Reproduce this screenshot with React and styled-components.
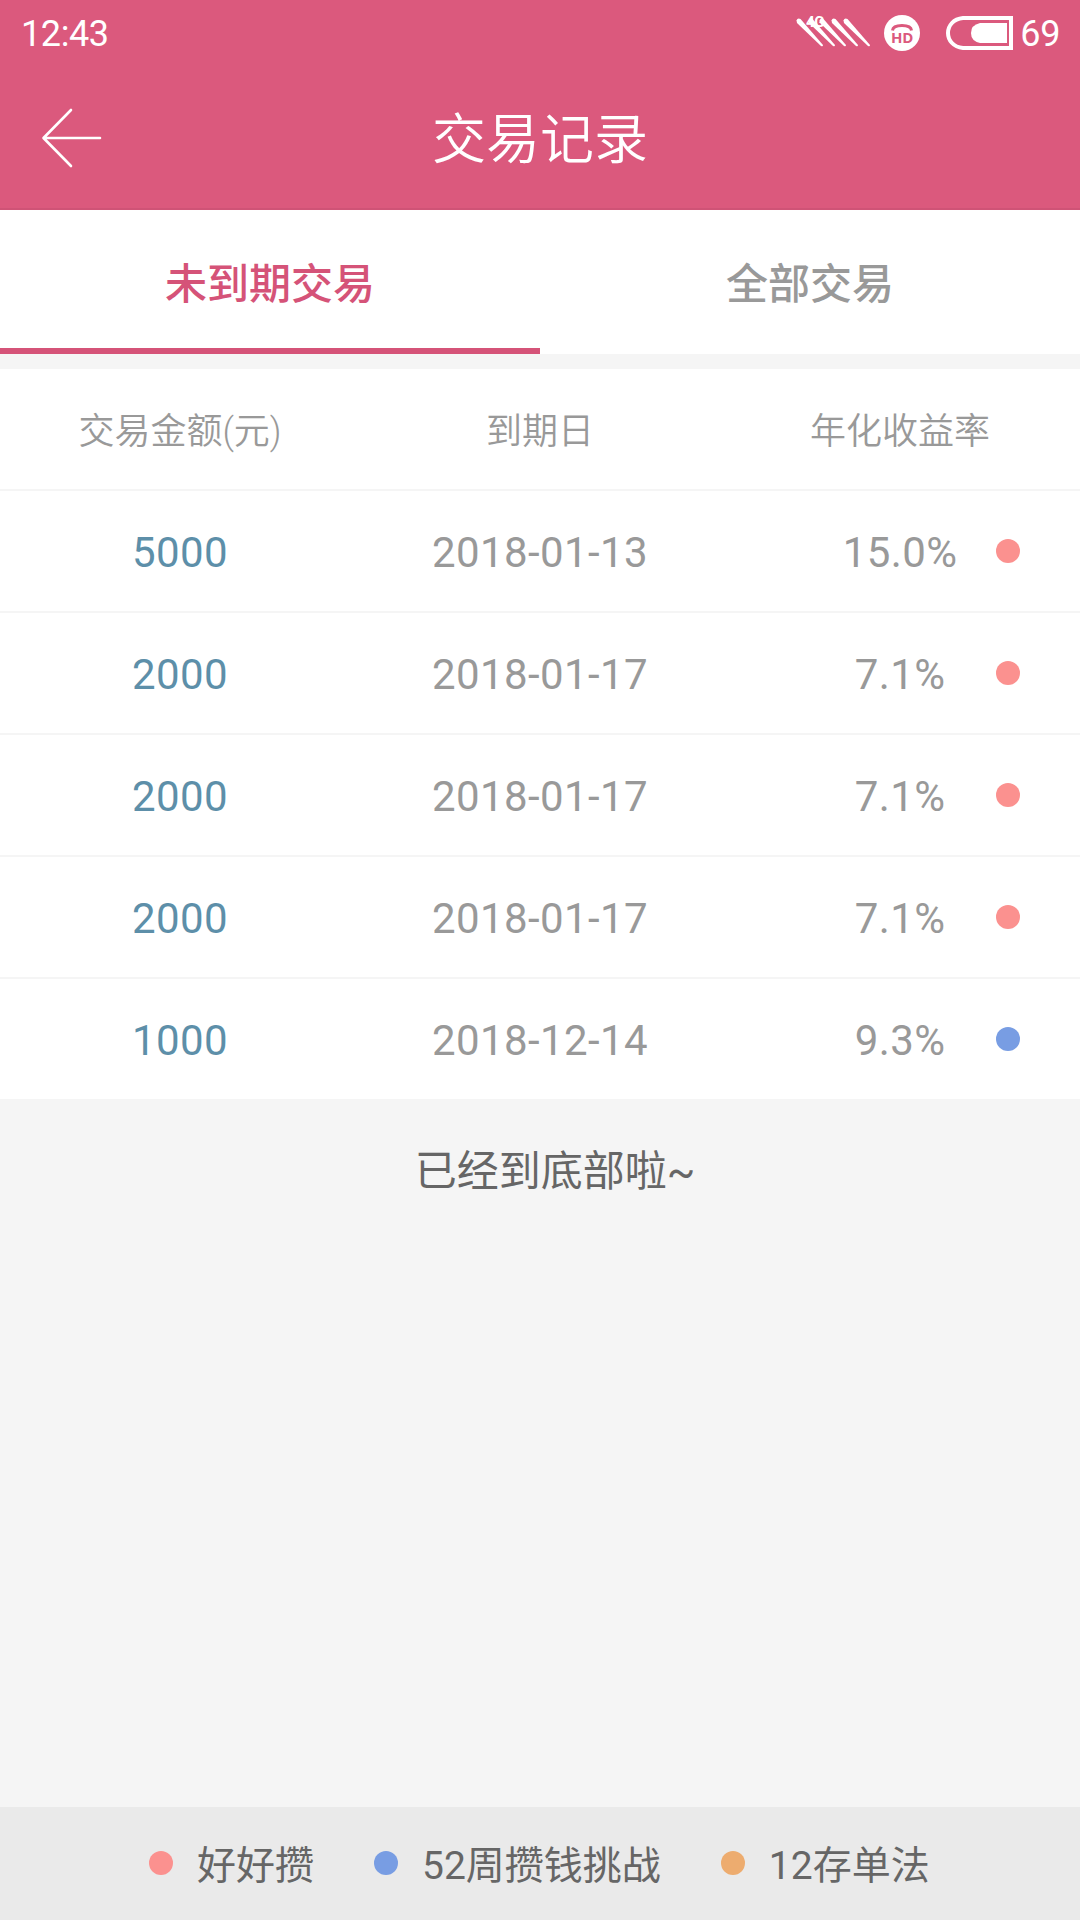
import React from 'react';
import styled, { createGlobalStyle } from 'styled-components';

const GlobalStyle = createGlobalStyle`
    body {
        margin: 0;
        background: #f5f5f5;
    }
`;

const Screen = styled.div`
    width: 1080px;
    height: 1920px;
    overflow: hidden;

    display: flex;
    flex-direction: column;

    background: #f5f5f5;
    font-family: Roboto, 'Noto Sans CJK SC', sans-serif;
`;

const Header = styled.header`
    box-sizing: border-box;
    height: 210px;
    border-bottom: 2px solid #cf5376;
    background: #db597d;
    color: #fff;
`;

const StatusBar = styled.div`
    box-sizing: border-box;
    height: 66px;
    padding: 0 20px 0 21px;

    display: flex;
    align-items: center;
    justify-content: space-between;

    font-size: 36px;
    letter-spacing: -0.4px;
    line-height: 66px;
`;

const StatusText = styled.span`
    padding-top: 2px;
    line-height: 64px;
`;

const StatusIcons = styled.div`
    display: flex;
    align-items: center;
`;

const SignalIcon = styled.svg`
    margin-right: 12px;
`;

const HdIcon = styled.svg`
    margin-right: 26px;
`;

const BatteryIcon = styled.svg`
    margin-right: 6px;
`;

const NavBar = styled.div`
    height: 142px;

    display: grid;
    grid-template-columns: 180px 1fr 180px;
    align-items: center;
`;

const BackButton = styled.button`
    width: 66px;
    height: 66px;
    margin: 2px 0 0 40px;
    padding: 0;
    border: none;
    background: none;

    svg {
        display: block;
    }
`;

const Title = styled.h1`
    margin: 0;
    padding-top: 8px;
    text-align: center;
    font-size: 54px;
    font-weight: 350;
    line-height: 134px;
`;

const Tabs = styled.nav`
    height: 144px;
    margin-bottom: 15px;
    display: flex;
    background: #fff;
`;

const Tab = styled.div`
    box-sizing: border-box;
    flex: 1;
    padding-top: 3px;
    border-bottom: 6px solid ${props => (props.$active ? '#d55378' : '#fff')};

    color: ${props => (props.$active ? '#d55378' : '#999')};
    text-align: center;
    font-size: 42px;
    font-weight: 500;
    line-height: 144px;
`;

const Row = styled.div`
    height: 120px;

    display: grid;
    grid-template-columns: repeat(3, 360px);
    align-items: center;

    background: #fff;
    color: #999;

    & + & {
        border-top: 2px solid #f5f5f5;
    }
`;

const HeadCell = styled.div`
    padding-top: 6px;
    text-align: center;
    font-size: 36px;
    font-weight: 350;
    line-height: 114px;
`;

const Cell = styled.div`
    grid-row: 1;
    padding-top: 4px;
    text-align: center;
    font-size: 42px;
    letter-spacing: 0.4px;
    line-height: 116px;
    color: ${props => props.$color || '#999'};
`;

const RateCell = styled(Cell)`
    grid-column: 3;
`;

const Dot = styled.span`
    width: 24px;
    height: 24px;
    border-radius: 50%;
    background: ${props => props.$color};
`;

const RowDot = styled(Dot)`
    grid-row: 1;
    grid-column: 3;
    justify-self: end;
    margin-right: 60px;
`;

const EndNote = styled.p`
    flex: 1;
    margin: 0;
    padding: 38px 0 0 30px;

    color: #666;
    text-align: center;
    font-size: 42px;
    font-weight: 400;
    line-height: 70px;
`;

const Legend = styled.footer`
    box-sizing: border-box;
    height: 113px;
    padding: 0 0 1px 149px;

    display: flex;
    align-items: center;
    gap: 60px;

    background: #eaeaea;
`;

const LegendItem = styled.div`
    display: flex;
    align-items: center;
    gap: 24px;

    color: #666;
    font-size: 39px;
    font-weight: 400;
`;

const LegendLabel = styled.span`
    padding-top: 6px;
    line-height: 106px;
`;

const colors = {
    save: '#fb918f',
    weekly: '#789de3',
    deposit: '#edac6f'
};

const records = [
    { amount: '5000', date: '2018-01-13', rate: '15.0%', type: 'save' },
    { amount: '2000', date: '2018-01-17', rate: '7.1%', type: 'save' },
    { amount: '2000', date: '2018-01-17', rate: '7.1%', type: 'save' },
    { amount: '2000', date: '2018-01-17', rate: '7.1%', type: 'save' },
    { amount: '1000', date: '2018-12-14', rate: '9.3%', type: 'weekly' }
];

const legend = [
    { label: '好好攒', type: 'save' },
    { label: '52周攒钱挑战', type: 'weekly' },
    { label: '12存单法', type: 'deposit' }
];

const Signal = () => (
    <SignalIcon width="76" height="48" viewBox="0 -6 76 48">
        <g fill="#fff">
            {[0, 12, 23, 35, 47].map(x => (
                <path key={x} d={`M${x + 0.5} 5.500 Q${x + 1.5} 2.500 ${x + 4.5} 4 L${x + 27} 30 Q${x + 27} 32 ${x + 25} 31 L${x + 1} 8 Z`} />
            ))}
        </g>
        <text x="10" y="12" fill="#fff" fontSize="15" fontWeight="700">4G</text>
    </SignalIcon>
);

const Hd = () => (
    <HdIcon width="36" height="36" viewBox="0 0 36 36">
        <circle cx="18" cy="18" r="18" fill="#fff" />
        <path d="M8.500 15.500 Q9 10.500 18 10.500 Q27 10.500 27.500 15.500" fill="none" stroke="#db597d" strokeWidth="3" />
        <text x="18" y="28" fill="#db597d" fontFamily="Open Sans" fontSize="15" fontWeight="700" textAnchor="middle">HD</text>
    </HdIcon>
);

const Battery = () => (
    <BatteryIcon width="68" height="34" viewBox="0 0 68 34">
        <path d="M17 2 H65 V32 H17 C-3 30 -3 4 17 2 Z" fill="none" stroke="#fff" strokeWidth="4" />
        <path d="M34 7 H61 V27 H34 Q25 25 25 17 Q25 9 34 7 Z" fill="#fff" />
    </BatteryIcon>
);

const App = () => (
    <Screen>
        <GlobalStyle />
        <Header>
            <StatusBar>
                <StatusText>12:43</StatusText>
                <StatusIcons>
                    <Signal />
                    <Hd />
                    <Battery />
                    <StatusText>69</StatusText>
                </StatusIcons>
            </StatusBar>
            <NavBar>
                <BackButton aria-label="返回">
                    <svg width="66" height="66" viewBox="0 0 66 66">
                        <path
                            d="M31 5 L3.500 33 L31 61 M4 33 H60"
                            fill="none"
                            stroke="#fff"
                            strokeWidth="2.600"
                            strokeLinecap="round"
                            strokeLinejoin="round"
                        />
                    </svg>
                </BackButton>
                <Title>交易记录</Title>
            </NavBar>
        </Header>
        <Tabs>
            <Tab $active>未到期交易</Tab>
            <Tab>全部交易</Tab>
        </Tabs>
        <Row>
            <HeadCell>交易金额(元)</HeadCell>
            <HeadCell>到期日</HeadCell>
            <HeadCell>年化收益率</HeadCell>
        </Row>
        {records.map((record, index) => (
            <Row key={index}>
                <Cell $color="#5d8fa9">{record.amount}</Cell>
                <Cell>{record.date}</Cell>
                <RateCell>{record.rate}</RateCell>
                <RowDot $color={colors[record.type]} />
            </Row>
        ))}
        <EndNote>已经到底部啦~</EndNote>
        <Legend>
            {legend.map(item => (
                <LegendItem key={item.type}>
                    <Dot $color={colors[item.type]} />
                    <LegendLabel>{item.label}</LegendLabel>
                </LegendItem>
            ))}
        </Legend>
    </Screen>
);

export default App;
